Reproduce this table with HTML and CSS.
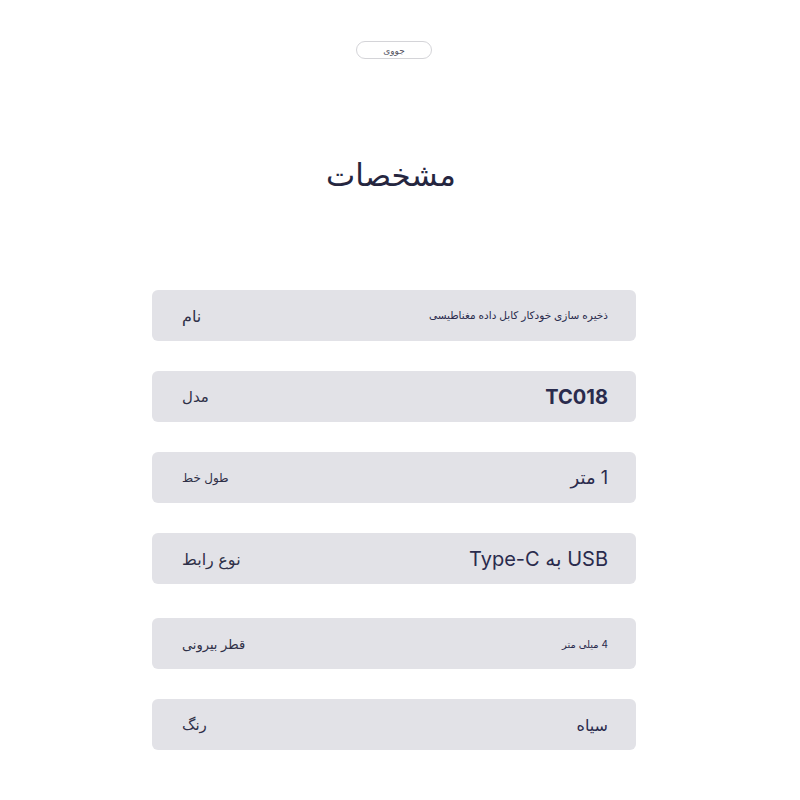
FILE: index.html
```html
<!DOCTYPE html>
<html lang="fa">
<head>
<meta charset="utf-8">
<link rel="stylesheet" href="styles.css">
</head>
<body>
<main class="page">
  <div class="pill" dir="rtl">جووی</div>
  <h1 class="title" dir="rtl">مشخصات</h1>
  <section class="specs">
    <div class="row">
      <span class="label l-16" dir="rtl">نام</span>
      <span class="value v-name" dir="rtl">ذخیره سازی خودکار کابل داده مغناطیسی</span>
    </div>
    <div class="row">
      <span class="label l-15" dir="rtl">مدل</span>
      <span class="value v-bold" dir="rtl">TC018</span>
    </div>
    <div class="row">
      <span class="label l-12" dir="rtl">طول خط</span>
      <span class="value v-18" dir="rtl">1 متر</span>
    </div>
    <div class="row">
      <span class="label l-16" dir="rtl">نوع رابط</span>
      <span class="value v-20" dir="rtl">USB به Type-C</span>
    </div>
    <div class="row row-gap-extra">
      <span class="label l-13" dir="rtl">قطر بیرونی</span>
      <span class="value v-10" dir="rtl">4 میلی متر</span>
    </div>
    <div class="row">
      <span class="label l-15" dir="rtl">رنگ</span>
      <span class="value v-16" dir="rtl">سیاه</span>
    </div>
  </section>
</main>
</body>
</html>
```

FILE: styles.css
```css
* { box-sizing: border-box; }
body {
  margin: 0;
  background: #ffffff;
  font-family: Inter, "DejaVu Sans", sans-serif;
  color: #2a2b4a;
}
.page {
  width: 484px;
  margin-left: 152px;
  display: flex;
  flex-direction: column;
  align-items: center;
  padding-top: 41px;
}
.pill {
  width: 76px;
  height: 18px;
  border: 1px solid #d4d4d8;
  border-radius: 9px;
  font-size: 9px;
  color: #55555f;
  display: flex;
  align-items: center;
  justify-content: center;
}
.title {
  margin: 95px 6px 0 0;
  font-size: 31px;
  font-weight: 400;
  line-height: 42px;
  color: #25263f;
}
.specs {
  width: 100%;
  margin-top: 94px;
  display: flex;
  flex-direction: column;
  gap: 30px;
}
.row {
  height: 51px;
  background: #e2e2e7;
  border-radius: 6px;
  display: flex;
  align-items: center;
  justify-content: space-between;
  padding: 0 28px 0 30px;
}
.row-gap-extra { margin-top: 4px; }
.label { color: #2f3048; }
.l-12 { font-size: 12px; }
.l-13 { font-size: 13px; }
.l-15 { font-size: 15px; }
.l-16 { font-size: 16px; }
.value { color: #2a2b4d; }
.v-name { font-size: 10.5px; }
.v-10 { font-size: 10px; }
.v-16 { font-size: 16px; }
.v-18 { font-size: 18px; }
.v-20 { font-size: 20px; }
.v-bold { font-size: 20px; font-weight: 700; }
```
